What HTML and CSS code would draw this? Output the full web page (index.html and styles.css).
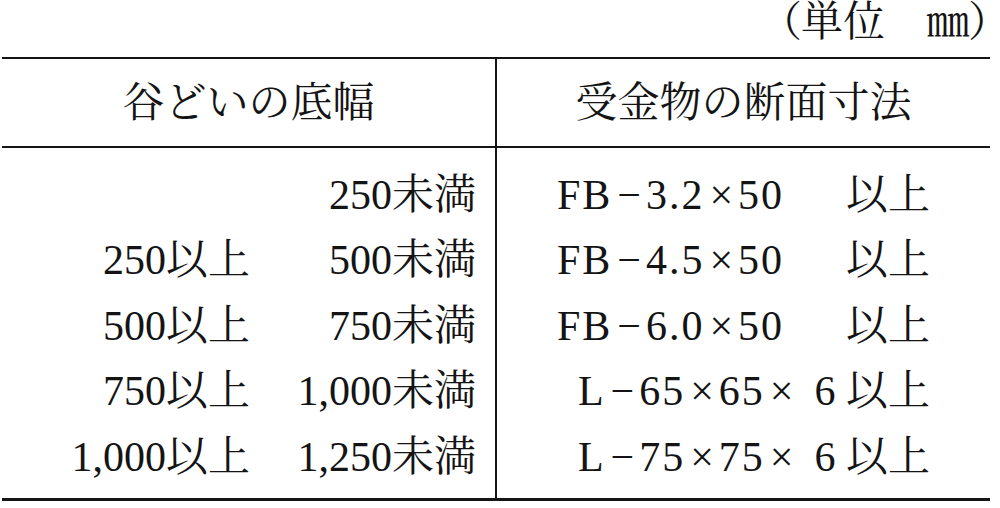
FILE: index.html
```html
<!DOCTYPE html>
<html lang="ja">
<head>
<meta charset="utf-8">
<title>受金物の断面寸法</title>
<link rel="stylesheet" href="styles.css">
</head>
<body>
<div class="page">
  <div class="unit">（単位　㎜）</div>
  <table class="spec">
    <thead>
      <tr>
        <th class="col-a">谷どいの底幅</th>
        <th class="col-b">受金物の断面寸法</th>
      </tr>
    </thead>
    <tbody>
      <tr class="first">
        <td class="col-a"><div class="range"><span class="lo"></span><span class="hi">250未満</span></div></td>
        <td class="col-b"><div class="size fb"><span class="dim">FB<span class="op">−</span>3.2<span class="op">×</span>50</span><span class="min">以上</span></div></td>
      </tr>
      <tr>
        <td class="col-a"><div class="range"><span class="lo">250以上</span><span class="hi">500未満</span></div></td>
        <td class="col-b"><div class="size fb"><span class="dim">FB<span class="op">−</span>4.5<span class="op">×</span>50</span><span class="min">以上</span></div></td>
      </tr>
      <tr>
        <td class="col-a"><div class="range"><span class="lo">500以上</span><span class="hi">750未満</span></div></td>
        <td class="col-b"><div class="size fb"><span class="dim">FB<span class="op">−</span>6.0<span class="op">×</span>50</span><span class="min">以上</span></div></td>
      </tr>
      <tr>
        <td class="col-a"><div class="range"><span class="lo">750以上</span><span class="hi">1,000未満</span></div></td>
        <td class="col-b"><div class="size angle"><span class="dim">L<span class="op">−</span>65<span class="op">×</span>65<span class="op">×</span>&#8196;6</span><span class="min">以上</span></div></td>
      </tr>
      <tr class="last">
        <td class="col-a"><div class="range"><span class="lo">1,000以上</span><span class="hi">1,250未満</span></div></td>
        <td class="col-b"><div class="size angle"><span class="dim">L<span class="op">−</span>75<span class="op">×</span>75<span class="op">×</span>&#8196;6</span><span class="min">以上</span></div></td>
      </tr>
    </tbody>
  </table>
</div>
</body>
</html>
```

FILE: styles.css
```css
* {
  box-sizing: border-box;
}

html, body {
  margin: 0;
  background: #ffffff;
}

body {
  color: #141414;
  font-family: "Liberation Serif", "Noto Serif CJK JP", "Noto Sans CJK JP", serif;
  font-size: 42px;
}

.page {
  width: 1000px;
  height: 508px;
  padding: 0 10px 0 2px;
  overflow: hidden;
}

.unit {
  height: 57px;
  line-height: 44px;
  text-align: right;
  font-feature-settings: "palt";
  white-space: pre;
}

.spec {
  width: 988px;
  table-layout: fixed;
  border-collapse: separate;
  border-spacing: 0;
  border-top: 2px solid #151515;
  border-bottom: 3px solid #151515;
}

.spec th {
  height: 89px;
  padding: 0;
  font-weight: normal;
  text-align: center;
  vertical-align: middle;
  line-height: 1;
  border-bottom: 2px solid #151515;
}

.spec td {
  height: 65.5px;
  padding: 0;
  vertical-align: middle;
  line-height: 1;
}

.spec .col-a {
  width: 495px;
  border-right: 2px solid #151515;
}

.spec tr.first td {
  height: 79.5px;
  padding-top: 14px;
}

.spec tr.last td {
  height: 73.5px;
  padding-bottom: 8px;
}

.range {
  display: grid;
  grid-template-columns: 248px 226px;
  white-space: nowrap;
}

.range span {
  text-align: right;
}

.size {
  display: flex;
  justify-content: space-between;
  padding-right: 60px;
  white-space: pre;
}

.size.fb {
  padding-left: 60px;
}

.size.angle {
  padding-left: 81px;
}

.dim {
  letter-spacing: 2px;
}

.op {
  display: inline-block;
  width: 0.8em;
  text-align: center;
  letter-spacing: 0;
}
```
